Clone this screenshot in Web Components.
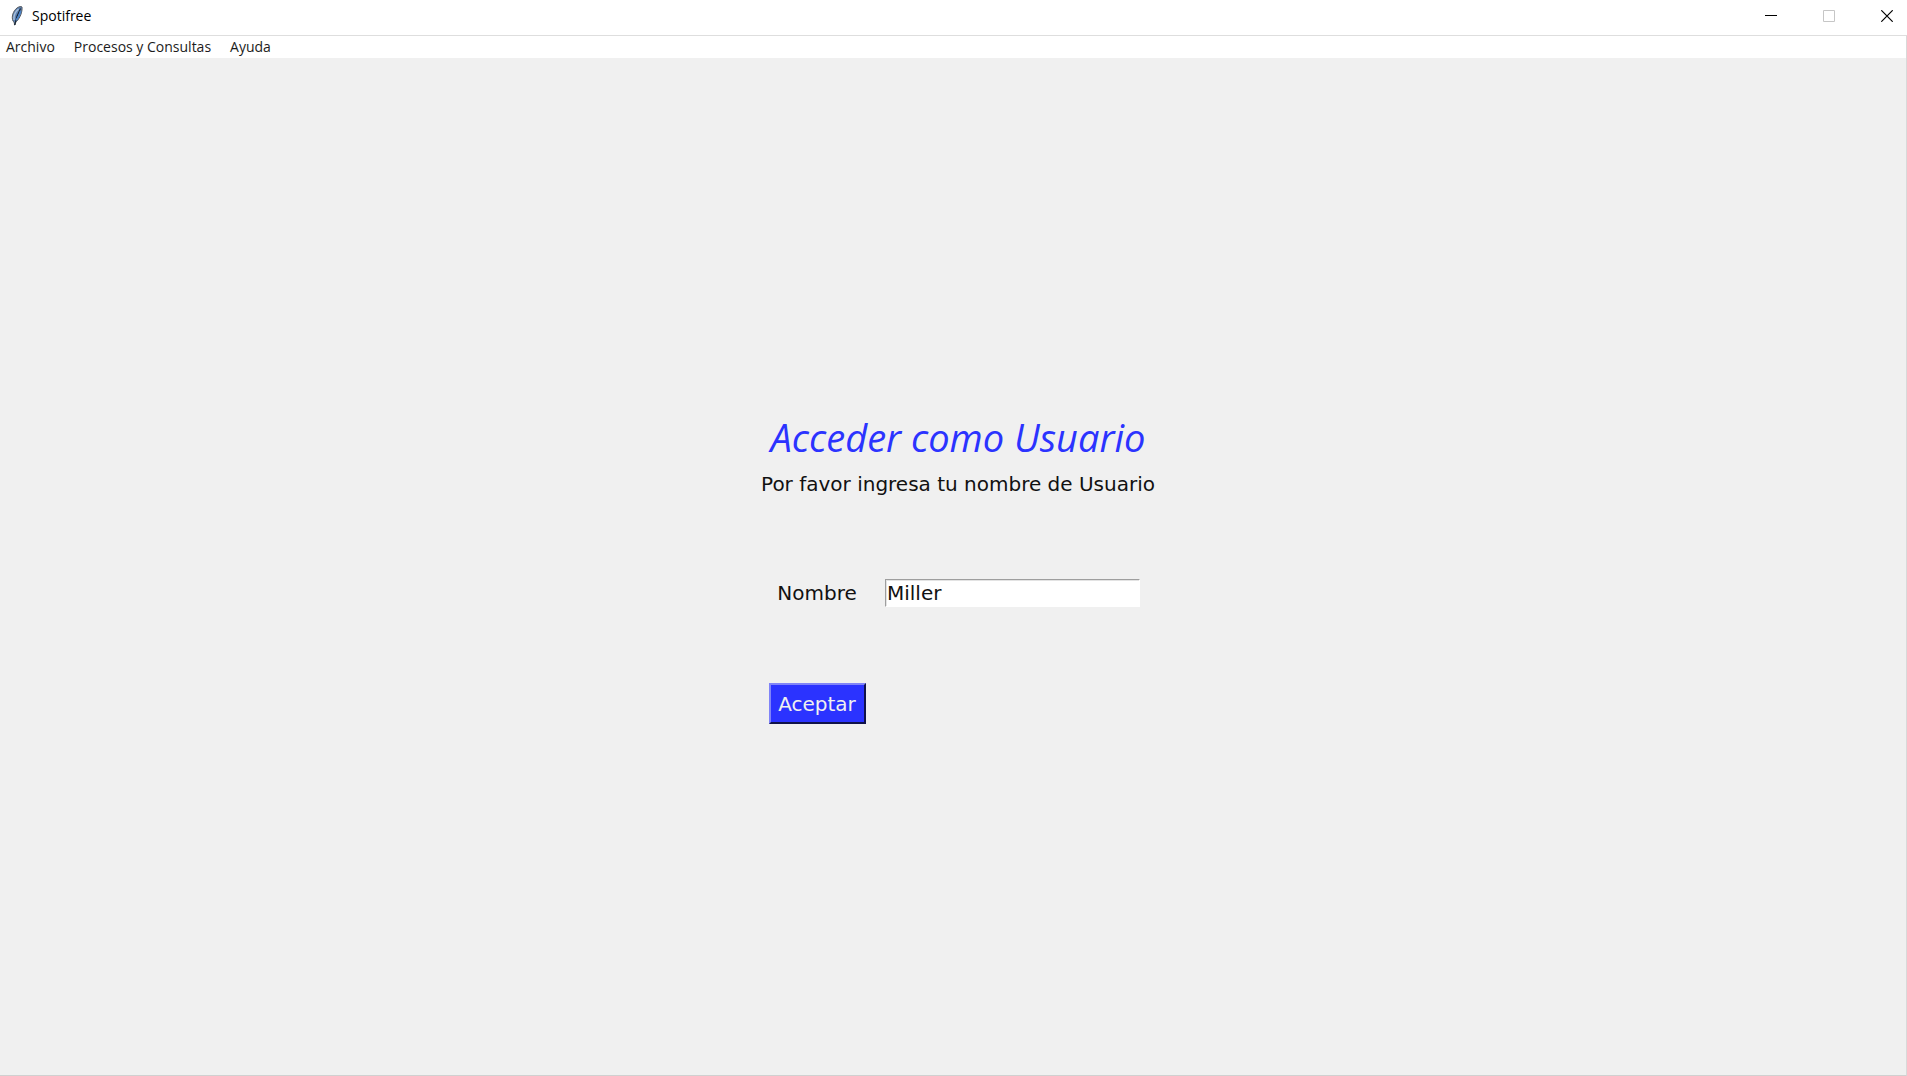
<!DOCTYPE html>
<html lang="es">
<head>
<meta charset="utf-8">
<title>Spotifree</title>
<style>
  html, body { height: 100%; margin: 0; }
  body { background: #f0f0f0; }
</style>
</head>
<body>
<app-window></app-window>

<template id="t-window">
  <style>
    :host { display: flex; flex-direction: column; height: 100%; background: #f0f0f0; }
    .client { flex: 1; display: flex; flex-direction: column; border-top: 1px solid #dedede; border-right: 1px solid #d9d9d9; border-bottom: 1px solid #d0d0d0; }
    main { flex: 1; display: flex; align-items: center; justify-content: center; padding: 2px 0 0 10px; }
  </style>
  <title-bar>Spotifree</title-bar>
  <div class="client">
    <menu-bar>
      <menu-item>Archivo</menu-item>
      <menu-item>Procesos y Consultas</menu-item>
      <menu-item>Ayuda</menu-item>
    </menu-bar>
    <main><login-form></login-form></main>
  </div>
</template>

<template id="t-title">
  <style>
    :host { display: flex; align-items: center; height: 35px; padding-left: 8px; background: #fff; color: #000; font: 14px/20px "Open Sans", sans-serif; }
    .logo { width: 18px; height: 20px; margin: 0 6px 4px 0; }
    .name { flex: 1; padding-bottom: 4px; }
    .controls { display: flex; gap: 18px; height: 31px; align-self: flex-start; }
    button { width: 40px; padding: 0; border: 0; background: none; display: flex; align-items: center; justify-content: center; }
    button svg { display: block; }
  </style>
  <svg class="logo" viewBox="0 0 18 20" aria-hidden="true">
    <path d="M6.5 19 C6.5 17 6 16 5 15 C3.200 11 5 5 9 2 C11 .5 13.500 .3 14 1 C14.500 6 12 12 8.500 15.500 C7.500 16.500 7.300 17.500 7 19Z" fill="#5e83b5" stroke="#55595e" stroke-width="1"/>
    <path d="M10.500 3 C7 6 5.500 10 6 14" fill="none" stroke="#a6bdd8" stroke-width="1.500"/>
    <path d="M12.500 2.500 C10 7 8 11 6.700 19" fill="none" stroke="#152333" stroke-width="1.200"/>
    <path d="M12.700 5 C11.700 9 10 12 8.300 14" fill="none" stroke="#4a82c6" stroke-width="1.800"/>
  </svg>
  <span class="name"><slot></slot></span>
  <div class="controls">
    <button aria-label="Minimizar"><svg width="12" height="12"><path d="M0 5.500H12" stroke="#000"/></svg></button>
    <button aria-label="Maximizar" disabled><svg width="12" height="12"><path d="M.5 .5H11.500V11.500H.5Z" fill="none" stroke="#c6c6c6"/></svg></button>
    <button aria-label="Cerrar"><svg width="12" height="12"><path d="M.3 .3L11.700 11.700M11.700 .3L.3 11.700" stroke="#000" stroke-width="1.200"/></svg></button>
  </div>
</template>

<template id="t-menubar">
  <style>
    :host { display: flex; height: 22px; background: #fff; }
  </style>
  <slot></slot>
</template>

<template id="t-menuitem">
  <style>
    :host { display: flex; }
    button { border: 0; background: none; padding: 0 13px 0 6px; color: #1c1c1c; font: 14px/22px "Open Sans", sans-serif; white-space: nowrap; }
  </style>
  <button><slot></slot></button>
</template>

<template id="t-form">
  <style>
    :host { display: block; min-width: 402px; color: #111; font: 20px/24px "DejaVu Sans", sans-serif; }
    form { display: flex; flex-direction: column; }
    h1 { margin: 0; text-align: center; color: #2b33ff; font: italic 38px/52px "Open Sans", sans-serif; }
    p { margin: 9px 0 83px; text-align: center; white-space: nowrap; }
    .grid { display: grid; grid-template-columns: 120px auto; column-gap: 8px; row-gap: 76px; align-items: center; justify-items: center; }
    input { box-sizing: border-box; width: 255px; height: 28px; justify-self: start; padding: 0 1px; border: 1px solid #fff; border-top-color: #9e9e9e; border-left-color: #9e9e9e; box-shadow: inset 1px 1px #e3e3e3; background: #fff; color: #111; font: inherit; outline: 0; border-radius: 0; }
    button { box-sizing: border-box; width: 97px; height: 41px; padding: 0; border: 2px solid; border-color: #8084f8 #10124a #10124a #8084f8; background: #2b33ff; color: #f0f0f0; font: inherit; }
  </style>
  <form>
    <h1>Acceder como Usuario</h1>
    <p>Por favor ingresa tu nombre de Usuario</p>
    <div class="grid">
      <label for="nombre">Nombre</label>
      <input id="nombre" type="text" value="Miller" spellcheck="false">
      <button type="button">Aceptar</button>
    </div>
  </form>
</template>

<script>
  const define = (name, templateId) => customElements.define(name, class extends HTMLElement {
    constructor() {
      super();
      this.attachShadow({ mode: "open" }).append(document.getElementById(templateId).content.cloneNode(true));
    }
  });
  define("title-bar", "t-title");
  define("menu-item", "t-menuitem");
  define("menu-bar", "t-menubar");
  define("login-form", "t-form");
  define("app-window", "t-window");
</script>
</body>
</html>
